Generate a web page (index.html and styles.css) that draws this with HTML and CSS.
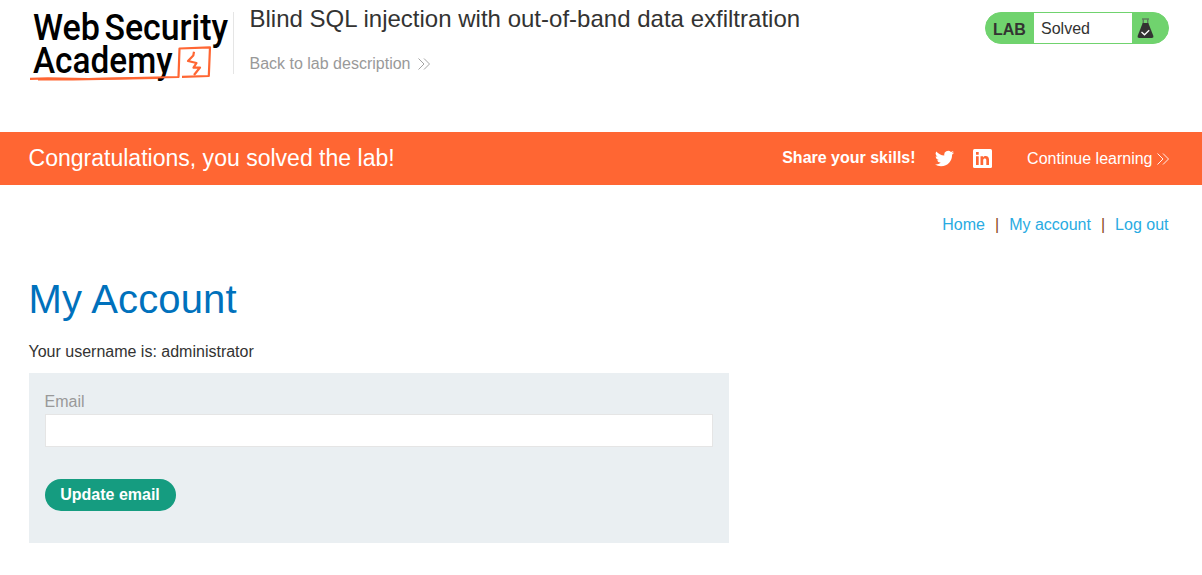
FILE: index.html
```
<!DOCTYPE html>
<html lang="en">
<head>
<meta charset="utf-8">
<title>Blind SQL injection with out-of-band data exfiltration</title>
<link rel="stylesheet" href="styles.css">
</head>
<body>
<header class="lab-header">
  <svg class="logo" width="205" height="76" viewBox="0 0 205 76" role="img" aria-label="Web Security Academy">
    <g class="logo-text">
      <text x="5" y="33.200" textLength="67" lengthAdjust="spacingAndGlyphs">Web</text>
      <text x="76.500" y="33.200" textLength="123.500" lengthAdjust="spacingAndGlyphs">Security</text>
      <text x="5" y="65.800" textLength="139.500" lengthAdjust="spacingAndGlyphs">Academy</text>
    </g>
    <g class="logo-mark">
      <path d="M2 71.800 L20 71.300 L60 72 L150.500 70 L151.500 41.500 L182 40.300 L180.800 69 L154 69.800"/>
      <path d="M10 72.300 L45 72.400 L130 71"/>
      <path d="M166 44.700 L165.300 48.500 L160 54 L168.500 56 L165.500 60.700 L172 60.500 L166 68"/>
    </g>
  </svg>
  <div class="title">
    <h2>Blind SQL injection with out-of-band data exfiltration</h2>
    <a class="back">Back to lab description
      <svg class="chevrons" width="12" height="12" viewBox="0 0 12 12"><path d="M.5.5 6 6 .5 11.500M6 .5 11.500 6 6 11.500"/></svg>
    </a>
  </div>
  <div class="status">
    <span class="status-label">LAB</span>
    <span class="status-value">Solved</span>
    <svg class="flask" width="17" height="21" viewBox="0 0 17 21">
      <path class="glass" d="M6.200 1.500V6M10.800 1.500V6M5 1h7"/>
      <path class="liquid" d="M5.700 5h5.600L16.200 17.500Q17 20 14.500 20h-12Q0 20 .8 17.500z"/>
      <path class="check" d="M4.500 14 7.500 16.800 12.200 12.200"/>
    </svg>
  </div>
</header>
<section class="banner">
  <h4>Congratulations, you solved the lab!</h4>
  <strong>Share your skills!</strong>
  <svg class="twitter" width="19" height="17" viewBox="0 1.500 24 21"><path d="M23.950 4.570a10 10 0 0 1-2.820.780 4.960 4.960 0 0 0 2.160-2.720c-.950.550-2 .950-3.130 1.180a4.920 4.920 0 0 0-8.380 4.480C7.690 8.090 4.070 6.130 1.640 3.160a4.900 4.900 0 0 0 1.520 6.570 4.900 4.900 0 0 1-2.230-.610v.060a4.920 4.920 0 0 0 3.950 4.830 5 5 0 0 1-2.210.080 4.940 4.940 0 0 0 4.600 3.420A9.870 9.870 0 0 1 0 19.540a13.990 13.990 0 0 0 7.550 2.210c9.050 0 14-7.500 14-13.980l-.020-.640a9.940 9.940 0 0 0 2.460-2.550z"/></svg>
  <svg class="linkedin" width="19" height="19" viewBox="0 0 19 19"><rect width="19" height="19" rx="1.500"/><path d="M3 7.300h2.700V16H3zM3 3h2.700v2.700H3zM7.500 7.300H10v1.200c1.300-2.200 6-2.100 6 2V16h-2.700v-4.900c0-2.400-3.100-2.100-3.100 0V16H7.500z"/></svg>
  <a class="continue">Continue learning
    <svg class="chevrons" width="12" height="12" viewBox="0 0 12 12"><path d="M.5.5 6 6 .5 11.500M6 .5 11.500 6 6 11.500"/></svg>
  </a>
</section>
<main>
  <nav><a>Home</a><span>|</span><a>My account</a><span>|</span><a>Log out</a></nav>
  <h1>My Account</h1>
  <p>Your username is: administrator</p>
  <form>
    <label for="email">Email</label>
    <input id="email" type="email">
    <button type="button">Update email</button>
  </form>
</main>
</body>
</html>
```
FILE: styles.css
```
* { box-sizing: border-box; }
body {
  margin: 0;
  background: #fff;
  color: #333332;
  font: 16px/24px "Liberation Sans", Arial, sans-serif;
}
h1, h2, h4, p { margin: 0; font-weight: 400; }

.lab-header {
  display: flex;
  align-items: flex-start;
  height: 132px;
  padding: 7px 33px 0 28px;
}
.logo { display: block; flex: none; overflow: visible; }
.logo-text { font: 500 37.5px Roboto, sans-serif; fill: #000; }
.logo-mark { fill: none; stroke: #ff6633; stroke-width: 2.2; stroke-linejoin: round; }
.title {
  flex: 1;
  height: 62px;
  margin-top: 5px;
  padding-left: 15.5px;
  border-left: 1px solid #e5e5e5;
}
.title h2 { margin-top: -7px; font-size: 24px; line-height: 28px; letter-spacing: 0.01px; }
.back { display: flex; align-items: center; gap: 8px; margin-top: 19px; color: #999; }
.chevrons { flex: none; fill: none; stroke: currentColor; stroke-width: 0.9; }

.status {
  display: flex;
  align-items: center;
  width: 184px;
  height: 32px;
  margin-top: 5px;
  overflow: hidden;
  border: 1px solid #70d36e;
  border-radius: 16px;
  background: #70d36e;
}
.status-label { width: 48px; padding: 3px 0 0 7px; font-weight: 700; }
.status-value { width: 98px; height: 30px; padding-left: 7px; background: #fff; line-height: 31px; }
.flask { margin-left: 5px; }
.glass { fill: none; stroke: #555; stroke-width: 1; }
.liquid { fill: #333332; }
.check { fill: none; stroke: #fff; stroke-width: 1.3; }

.banner {
  display: flex;
  align-items: center;
  height: 53px;
  padding: 0 33px 0 28.5px;
  background: #ff6633;
  color: #fff;
}
.banner h4 { flex: 1; margin-bottom: 1px; font-size: 23.04px; }
.banner strong { margin-bottom: 2px; }
.twitter { margin: 0 0 1px 19.5px; fill: #fff; }
.linkedin { margin-left: 19px; fill: #fff; }
.linkedin path { fill: #ff6633; }
.continue { display: flex; align-items: center; gap: 4px; margin-left: 35px; }
.banner .continue { margin-right: 0.5px; }

main { padding: 28px 33.5px 0 28.5px; }
nav { display: flex; justify-content: flex-end; gap: 10px; color: #8a4b20; }
nav a { color: #29abe2; }
h1 { margin-top: 38px; color: #0071bc; font-size: 40px; line-height: 48px; letter-spacing: 0.15px; }
p { margin-top: 17px; }
form {
  display: flex;
  flex-direction: column;
  align-items: flex-start;
  width: 700px;
  height: 170px;
  margin-top: 9px;
  padding: 17px 16px 16px;
  background: #eaeff2;
}
label { color: #999; }
input { width: 668px; height: 33px; border: 1px solid #e5e5e5; background: #fff; }
button {
  width: 131px;
  height: 32px;
  margin-top: 32px;
  padding: 0;
  border: 0;
  border-radius: 16px;
  background: #159c80;
  color: #fff;
  font: 700 16px "Liberation Sans", Arial, sans-serif;
}
```
